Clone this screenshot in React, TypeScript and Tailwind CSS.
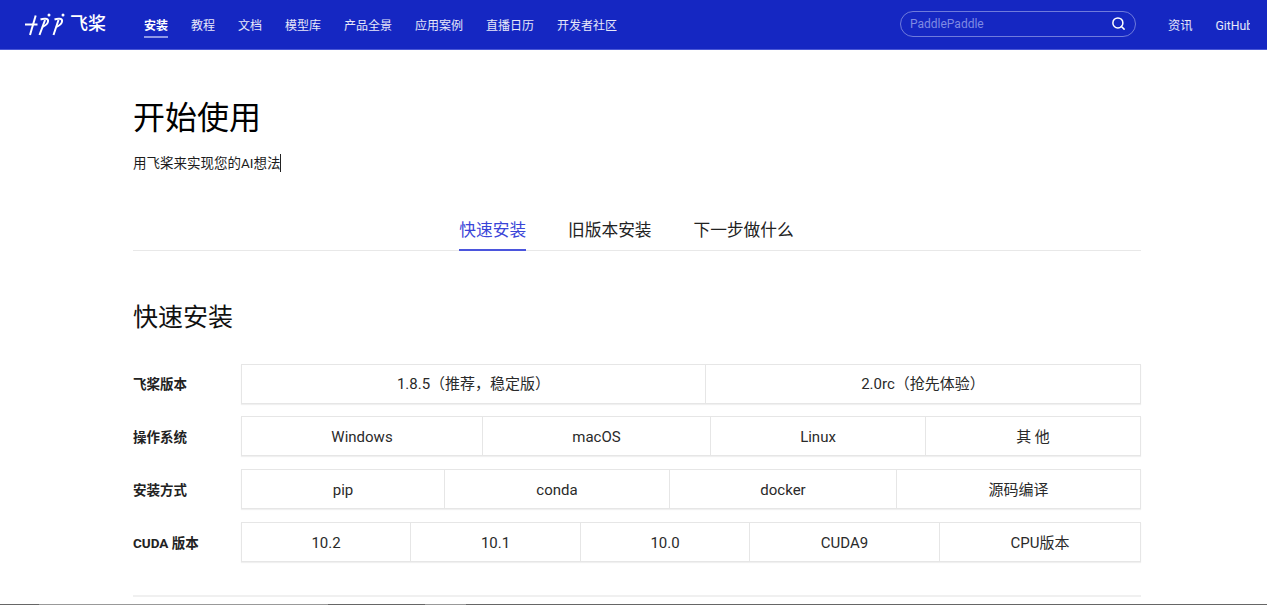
import { Search } from "lucide-react";

const FONT = "font-['Roboto','Noto_Sans_CJK_SC',sans-serif]";

const nav = ["安装", "教程", "文档", "模型库", "产品全景", "应用案例", "直播日历", "开发者社区"];
const tabs = ["快速安装", "旧版本安装", "下一步做什么"];

const rows = [
  {
    label: "飞桨版本",
    cols: "grid-cols-[463px_1fr]",
    cells: ["1.8.5（推荐，稳定版）", "2.0rc（抢先体验）"],
  },
  {
    label: "操作系统",
    cols: "grid-cols-[240px_228px_215px_1fr]",
    cells: ["Windows", "macOS", "Linux", "其 他"],
  },
  {
    label: "安装方式",
    cols: "grid-cols-[202px_225px_227px_1fr]",
    cells: ["pip", "conda", "docker", "源码编译"],
  },
  {
    label: "CUDA 版本",
    cols: "grid-cols-[168px_170px_169px_190px_1fr]",
    cells: ["10.2", "10.1", "10.0", "CUDA9", "CPU版本"],
  },
];

function Logo() {
  return (
    <div className="flex items-center gap-[3px] text-white">
      <svg width="42" height="26" viewBox="0 0 42 26" fill="none" stroke="currentColor" strokeWidth="2" className="-mt-[3px]">
        <path d="M0 14.5H12.5" />
        <path d="M10.7 5.5L5 25" />
        <path d="M15.5 9.5c3-1 7.8-1.2 7.6 1.5c-.2 2.8-2.6 4.6-5.6 5.7" />
        <path d="M20 10L14.5 25" />
        <circle cx="24" cy="5" r="1.5" fill="currentColor" stroke="none" />
        <path d="M29.5 9.5c3-1 7.8-1.2 7.6 1.5c-.2 2.8-2.6 4.6-5.6 5.7" />
        <path d="M33.5 10L28.5 25" />
        <circle cx="38" cy="5" r="1.5" fill="currentColor" stroke="none" />
      </svg>
      <span className="-mt-[1px] text-[18px] leading-none font-medium">飞桨</span>
    </div>
  );
}

export default function App() {
  return (
    <div className={`${FONT} relative h-[605px] overflow-hidden bg-white text-[#1c1c1c]`}>
      <header className="flex h-[50px] items-center border-b border-[#4a58d6] bg-[#1527c2] pl-[25px] text-white">
        <Logo />
        <nav className="ml-[38px] flex h-full gap-[23px]">
          {nav.map((item, i) => (
            <a
              key={item}
              className={`relative flex items-center pt-[3px] text-[12px] ${i === 0 ? "font-bold text-white" : "text-white/90"}`}
            >
              {item}
              {i === 0 && <span className="absolute top-[36px] right-0 left-0 h-[2px] bg-[#8e97e6]" />}
            </a>
          ))}
        </nav>
        <div className="-mt-[2px] ml-auto flex h-[26px] w-[236px] items-center justify-between rounded-full border border-[#6f7bdc] pr-[9px] pl-[9px]">
          <span className="text-[12px] text-[#7f8ae2]">PaddlePaddle</span>
          <Search size={15} strokeWidth={2.4} />
        </div>
        <div className="ml-[32px] flex w-[82px] gap-[23px] overflow-hidden pt-[3px] text-[12.25px] whitespace-nowrap text-white/90">
          <a>资讯</a>
          <a>GitHub</a>
        </div>
        <div className="w-[17px]" />
      </header>

      <main className="mx-[133px] w-[1008px]">
        <h1 className="mt-[46px] h-[44px] text-[32px] leading-[44px] font-normal text-black">开始使用</h1>
        <p className="mt-[13px] flex h-[20px] items-center text-[13.5px] leading-[20px]">
          用飞桨来实现您的AI想法
          <span className="h-[18px] w-px bg-[#222]" />
        </p>

        <div className="mt-[35px] flex h-[43px] justify-center gap-[42px] border-b border-[#e8e8e8] pr-[21px]">
          {tabs.map((t, i) => (
            <a
              key={t}
              className={`flex h-[43px] items-center border-b-2 pt-[5px] text-[16.7px] ${i === 0 ? "border-[#4b55dd] text-[#3a45d8]" : "border-transparent text-[#222]"}`}
            >
              {t}
            </a>
          ))}
        </div>

        <h2 className="mt-[48px] h-[38px] text-[25px] leading-[38px] font-normal text-[#111]">快速安装</h2>

        <div className="mt-[27px] flex flex-col gap-[13px]">
          {rows.map((row, r) => (
            <div key={row.label} className="flex h-[40px] items-center first:-mb-px">
              <div className={`w-[108px] text-[13.5px] font-bold text-[#222] ${r > 0 ? "pt-[2px]" : ""}`}>{row.label}</div>
              <div className={`grid h-full w-[900px] ${row.cols} border border-[#e6e6e6] shadow-[0_1px_1px_rgba(0,0,0,0.06)]`}>
                {row.cells.map((cell, i) => (
                  <div
                    key={cell}
                    className={`flex items-center justify-center text-[15px] text-[#2a2a2a] ${i > 0 ? "border-l border-[#e6e6e6]" : ""} ${r > 0 ? "pt-[2px]" : ""}`}
                  >
                    {cell}
                  </div>
                ))}
              </div>
            </div>
          ))}
        </div>

        <div className="mt-[33px] h-[2px] bg-[#f0f0f0]" />
      </main>

      <div className="absolute right-0 bottom-0 left-0 flex h-[1px] bg-[#666]">
        <div className="ml-[39px] h-full w-[289px] bg-[#999]" />
        <div className="ml-[97px] h-full w-[41px] bg-[#999]" />
      </div>
    </div>
  );
}
